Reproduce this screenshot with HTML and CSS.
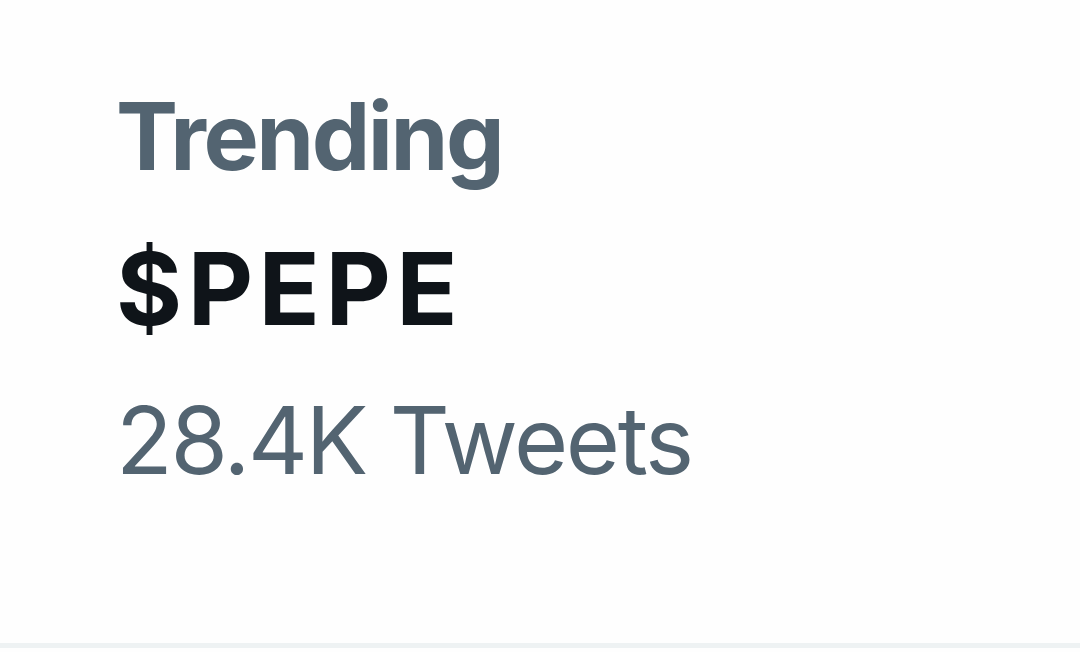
FILE: index.html
```html
<!DOCTYPE html>
<html>
    <head>
        <title>Trending</title>
        <link rel="stylesheet" href="styles.css">
    </head>
    <body>
        <div class='trend'>
            <div class='trend_ctx'>Trending</div>
            <div class='trend_name'>$PEPE</div>
            <div class='trend_count'>28.4K Tweets</div>
        </div>
    </body>
</html>
```

FILE: styles.css
```css
html, body {
    margin: 0;
    padding: 0;
    background: #fefefe;
    font-family: Inter, 'Noto Sans', sans-serif;
}
.trend {
    padding: 60px 0 127px 116px;
    border-bottom: 5px solid #eef2f3;
}
.trend_ctx {
    font-size: 93px;
    line-height: 152px;
    font-weight: 700;
    letter-spacing: -2.5px;
    color: #536471;
}
.trend_name {
    font-size: 101px;
    line-height: 152px;
    font-weight: 700;
    letter-spacing: 5.5px;
    color: #0f1419;
}
.trend_count {
    font-size: 93px;
    line-height: 152px;
    font-weight: 400;
    letter-spacing: -2.3px;
    color: #536471;
}
```
